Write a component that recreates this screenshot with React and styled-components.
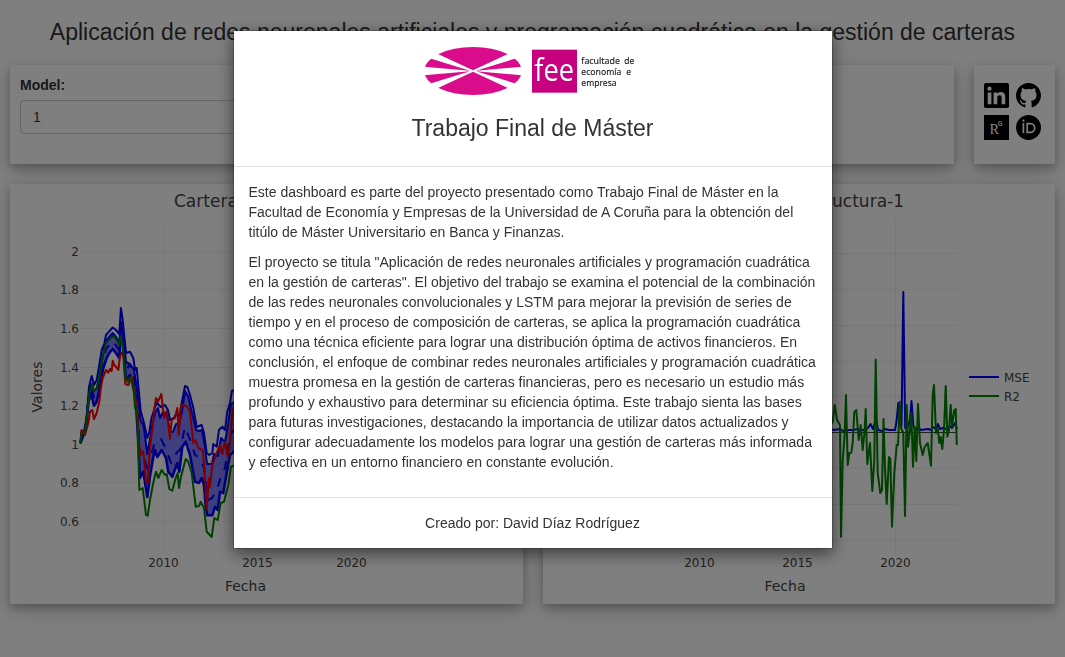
import React from 'react';
import styled, { createGlobalStyle } from 'styled-components';
import { BsGithub } from 'react-icons/bs';

const GlobalStyle = createGlobalStyle`
  * { box-sizing: border-box; }
  html, body { margin: 0; height: 100%; overflow: hidden; }
  body {
    background: #fff;
    color: #333;
    font: 14px/20px "Liberation Sans", Arial, sans-serif;
  }
`;

const Page = styled.div`
  display: flex;
  flex-direction: column;
  height: 657px;
  padding: 0 10px;
`;

const PageTitle = styled.h1`
  margin: 0;
  padding-top: 19px;
  height: 65px;
  font-size: 23px;
  line-height: 27px;
  font-weight: 400;
  text-align: center;
  white-space: nowrap;
`;

const Row = styled.div`
  display: flex;
  gap: 20px;
  margin-bottom: 20px;
`;

const Card = styled.section`
  flex: ${(p) => (p.$width ? `0 0 ${p.$width}px` : '1 1 0')};
  min-width: 0;
  height: ${(p) => p.$height}px;
  padding: ${(p) => p.$padding || '0'};
  background: #fff;
  box-shadow: 0 4px 8px 0 rgba(0, 0, 0, 0.2), 0 6px 20px 0 rgba(0, 0, 0, 0.19);
`;

const Label = styled.label`
  display: block;
  font-weight: 700;
  margin-bottom: 5px;
`;

const SelectBox = styled.div`
  width: 300px;
  height: 34px;
  padding: 6px 12px;
  border: 1px solid #ccc;
  border-radius: 4px;
`;

const IconGrid = styled.div`
  display: grid;
  grid-template-columns: 25px 25px;
  gap: 7px;
  color: #000;
  svg { display: block; width: 25px; height: 25px; }
`;

const Chart = styled.svg`
  display: block;
  width: 100%;
  height: 100%;
  font-family: "DejaVu Sans", Verdana, sans-serif;
  font-size: 12px;
  fill: #444;
`;

const Trace = styled.polyline`
  fill: none;
  stroke: ${(p) => p.$color};
  stroke-width: ${(p) => p.$weight || 2};
  stroke-linejoin: round;
  stroke-dasharray: ${(p) => (p.$dashed ? '9 9' : 'none')};
`;

const GridLine = styled.path`
  fill: none;
  stroke: #eee;
  shape-rendering: crispEdges;
`;

const Backdrop = styled.div`
  position: fixed;
  inset: 0;
  background: rgba(0, 0, 0, 0.5);
  display: flex;
  justify-content: center;
  align-items: flex-start;
  padding-top: 30px;
`;

const Modal = styled.div`
  width: 600px;
  background: #fff;
  background-clip: padding-box;
  border: 1px solid rgba(0, 0, 0, 0.2);
  box-shadow: 0 5px 15px rgba(0, 0, 0, 0.5);
`;

const ModalHeader = styled.header`
  height: 136px;
  padding-top: 5px;
  border-bottom: 1px solid #e5e5e5;
  text-align: center;
`;

const Logo = styled.svg`
  display: block;
  width: 240px;
  height: 70px;
  margin: 0 auto;
  position: relative;
  left: -3px;
`;

const ModalTitle = styled.h3`
  margin: 9px 0 0;
  font-size: 23px;
  line-height: 26px;
  font-weight: 400;
`;

const ModalBody = styled.div`
  padding: 15px;
  p { margin: 0 0 10px; }
`;

const ModalFooter = styled.footer`
  padding: 15px;
  border-top: 1px solid #e5e5e5;
  text-align: center;
`;

const upper = '80.5,443 81.5,431 84,432 86.7,416.7 89,387 91.7,376 94,385 96.7,380 99.3,365 101.7,350 104.3,344 106,335 109,331.7 112.7,327.5 116,330 119.3,334 120.9,308 122.7,320 124.7,340 126,353 130,351.7 133.3,358 135,370 136.7,368 138.7,390 140.7,411 144,423 147.3,438 149.3,432 151.5,418 155,407 157,403 160.7,407 165,405 168,410 170,420 174,418 176.7,413 179.3,417 181.7,403 185,386 187.3,387 190,395 193.3,408 196.7,427 201.7,425 204,433 206.7,453 209.3,455 212.3,453 213.3,444 216.7,446.7 219,430 222.3,426.7 225,430 227.3,411.7 230,403 232,390.7 238,389';
const inner = '80.5,443 82,433 85,433 87.5,409 90,386 92,384 94,391 97,388 100,372 103,355 106,341 109,337 112.7,333 116,337 119.3,342 121.2,322 123.5,338 126,362 130,364 134,370 137,390 140.7,421 143.5,425 147.3,454 149.5,442 152,427 155,413 158,408 160,418 163,412 167,415 170,432 173,432 176,424 179,424 182,412 185,391 188,396 192,413 196,430 199,431 202,430 205,447 207,464 212,464 214,454 218,456 221,438 225,442 228,425 231,404 238,400';
const middle = '80.5,443 83,434 86,424 89,393 92,390 94,397 98,386 102,362 106,349 110,344 113,341 119,350 121,330 124,350 126,371 130,364 134,377 137,400 140,453 144,451 147,474 150,458 155,442 161,439 166,449 171,463 177,452 180,450 185,427 191,442 195,455 200,458 204,468 208,500 212,498 217,490 221,476 225,468 230,435 238,425';
const lower = '80.5,443 83,436 86,428 88.5,402 91,393 94,405.7 96.7,401.7 100,386.7 103.3,368 106.7,358 109.3,353 112.7,349 116,353 119.3,358 120.7,337 122.7,340 126,380 130,375 134,387 136.5,412 138.3,443 140,478 143.3,471.7 147.3,497 150,476 153.3,456.7 155,450 157.3,457 161.7,450 166,458 168.3,471.7 172.3,476.7 177.3,463 179.3,471.7 182.3,446.7 185.7,441.7 190,455 195,481.7 199,483 201.7,478 204,485 205.7,506.7 207.3,515.3 212.3,515.3 215,506.7 217.7,510 220,491.7 223.3,493 226.7,473 230,455 238,448';
const green = '80.5,444 81.5,434 85,433 87.5,411 89.3,393 92,384 94,391 96.7,389 99.3,375 102.7,356.7 106,343 109.3,340 112.7,335.7 116,339 119.3,345 120.7,336.7 122.7,345 125.3,376.7 127.7,381.7 130.7,377 134,393 135,408 136.5,407 137.8,430 139.3,490 142.7,488 146,515 147.7,515.7 150,500 153,484 156,471.7 158.3,478 161.7,470 165,475 166.7,474 169.3,489 172.3,490.7 175.7,478 177.7,473 179,488 181,476.7 185.7,459 188.3,461.7 191.7,473 195.7,506.7 199,506 200.7,501.7 204,508 206.7,531.7 211.7,537 214.3,518 217.7,520 220.7,503 224,501.7 228.3,485 231,466.7 238,464';
const red = '80.5,441 81.7,430 85,435 88.3,423 90,411.7 92.3,410 94,419 96.7,413 99.3,401.7 101,386.7 102.7,378 106,370 108.3,372.7 110,369 111.7,371 112.7,360.7 114.3,365 116.7,367.7 118.3,370 120,356.7 121.7,352.7 123.3,355 125.3,384 128.3,385 131.7,377 134,390 135.7,400 137.5,412 139,443 140.7,455 143.3,451.7 146,481.7 147.7,483 150,447 152.7,427 154,411.7 156,398 158,401.7 161.3,394 164,418 166.7,410.7 170,439 171.7,420 175,418 177.3,408 178.7,435 181,405 186.7,406 190,411.7 193.3,443 195.7,440 198.3,448 202.7,450 204.3,466.7 206.7,509 209,478 210,486.7 212.3,465 216.7,453 220,445 222.3,454 225,441.7 227.7,457 230,443 232.7,410 238,400';
const mse = '826,430 830,429 834,430 840,429 843,431 848,430 853,430 858,429 861,430 865,430 868,428 870.5,424 873,429 876,419 878,430 882,431 885,429 889,430 895,430 896.6,421 898.3,403 900,418 901.5,426 903.3,292 905.2,428 907,429 910,420 911.5,401 913.3,425 915,430 918,427 921,430 928,429 931,430 933,427 936,429 938,424 940,429 943,428 946,429 950,426 952,428 955,423 957,429';
const r2 = '828,430 832.7,421.7 834.7,405 837,420 840,425 841,536.7 842.7,460 844.5,437 846,395 847.7,465 849.3,453 851.3,452.7 852.7,443 854.3,411.7 856.3,410 858.7,440 860.7,425 862.7,450 864.5,432 865.7,409 867.3,464 870,443 872.3,491 874.3,460 875.7,359.5 877.7,473 880.3,493 882,490 883.5,419 885,468 886.7,504 889,457 890.3,459 892,526.7 894.3,473 896.7,445 898,445 899.7,401.7 901,428 903.3,433 905,516 906.7,405 908,446.7 910,430 911.3,413 913,466.7 914.7,427 916.3,461 918,404 920,443 922.7,455 924.7,447 927.7,443 931,465.7 932.7,395 934,385 936,433 937.7,428 939.3,443 940.7,437 942.3,449 944,430 945.7,386 947.3,436.7 949,430 950.7,405 952,426.7 954.3,410 955.7,409 956.8,445';

const band = `${inner} ${lower.split(' ').reverse().join(' ')}`;
const yTicks = [
  ['2', 251], ['1.8', 289.5], ['1.6', 328], ['1.4', 367.2],
  ['1.2', 405], ['1', 444], ['0.8', 482.5], ['0.6', 521],
];

function PortfolioChart() {
  return (
    <Chart viewBox="10 184 513 420" preserveAspectRatio="xMinYMin">
      <text x="174" y="207" fontSize="17">Cartera Estructura-1</text>
      <GridLine d="M163.5 221V553M257.5 221V553M351.5 221V553" />
      {yTicks.map(([label, y]) => (
        <g key={label}>
          <GridLine d={`M80 ${Math.floor(y) + 0.5}H425`} />
          <text x="79" y={y + 4.5} textAnchor="end">{label}</text>
        </g>
      ))}
      <polygon points={band} fill="#00f" opacity=".5" />
      <Trace $color="#00f" points={upper} />
      <Trace $color="#00f" points={inner} />
      <Trace $color="#00f" $dashed points={middle} />
      <Trace $color="#00f" $weight={2.6} points={lower} />
      <Trace $color="#f00" points={red} />
      <Trace $color="green" points={green} />
      <text x="163.5" y="567" textAnchor="middle">2010</text>
      <text x="257.5" y="567" textAnchor="middle">2015</text>
      <text x="351.5" y="567" textAnchor="middle">2020</text>
      <text x="245.5" y="591" fontSize="14" textAnchor="middle">Fecha</text>
      <text transform="translate(42 387) rotate(-90)" fontSize="14" textAnchor="middle">Valores</text>
    </Chart>
  );
}

function MetricsChart() {
  return (
    <Chart viewBox="543 184 512 420" preserveAspectRatio="xMinYMin">
      <text x="904" y="207" fontSize="17" textAnchor="end">Métricas Estructura-1</text>
      <GridLine d="M699.5 219V553M797.5 219V553M895.5 219V553M613 253.5H957M613 289.5H957M613 325.5H957M613 361.5H957M613 396.5H957M613 468.5H957M613 504.5H957M613 540.5H957" />
      <path d="M613 432.5H957" stroke="#444" />
      <Trace $color="#00f" points={mse} />
      <Trace $color="green" points={r2} />
      <path d="M969 377H999" stroke="#00f" strokeWidth="2" />
      <path d="M969 396H999" stroke="green" strokeWidth="2" />
      <text x="1004" y="382">MSE</text>
      <text x="1004" y="401">R2</text>
      <text x="699.5" y="567" textAnchor="middle">2010</text>
      <text x="797.5" y="567" textAnchor="middle">2015</text>
      <text x="895.5" y="567" textAnchor="middle">2020</text>
      <text x="785" y="591" fontSize="14" textAnchor="middle">Fecha</text>
    </Chart>
  );
}

function LinkedinIcon() {
  return (
    <svg viewBox="0 0 25 25">
      <rect width="25" height="25" rx="1.8" />
      <g fill="#fff">
        <circle cx="5.5" cy="5.7" r="2.1" />
        <path d="M3.7 9.4H7.4V21.3H3.7ZM9.6 9.4H13.1V11C13.8 9.8 15.1 9.1 16.8 9.1C20.3 9.1 21.3 11.3 21.3 14.7V21.3H17.6V15.4C17.6 13.7 17.4 12.3 15.6 12.3C13.8 12.3 13.3 13.6 13.3 15.3V21.3H9.6Z" />
      </g>
    </svg>
  );
}

function ResearchGateIcon() {
  return (
    <svg viewBox="0 0 25 25">
      <rect width="25" height="25" />
      <text x="5.6" y="18.5" fontFamily="Liberation Serif, serif" fontSize="15.5" fill="#fff" textLength="9.6" lengthAdjust="spacingAndGlyphs">R</text>
      <text x="14" y="10.8" fontFamily="Liberation Sans, sans-serif" fontSize="7" fill="#fff" stroke="#fff" strokeWidth=".2" textLength="4.4" lengthAdjust="spacingAndGlyphs">G</text>
    </svg>
  );
}

function OrcidIcon() {
  return (
    <svg viewBox="0 0 25 25">
      <circle cx="12.5" cy="12.5" r="12.5" />
      <circle cx="7.4" cy="5.7" r="1.1" fill="#fff" />
      <path d="M7.4 8V18M11.2 8.7H14.4a4.3 4.3 0 0 1 0 8.6H11.2Z" fill="none" stroke="#fff" strokeWidth="1.7" />
    </svg>
  );
}

function FacultyLogo() {
  return (
    <Logo viewBox="0 0 720 210">
      <clipPath id="oval"><ellipse cx="189" cy="105" rx="146" ry="72" /></clipPath>
      <g clipPath="url(#oval)" fill="#d90d8c">
        <path d="M189 103L30 29V0H348V29ZM189 107L30 181V210H348V181Z" />
        <path d="M180 104L30 58V91ZM180 106L30 152V119ZM198 104L348 58V91ZM198 106L348 152V119Z" />
      </g>
      <rect x="366" y="41" width="135" height="129" fill="#c6007e" />
      <text x="373" y="135" fontFamily="Open Sans, sans-serif" fontSize="92" fill="#fff" textLength="119" lengthAdjust="spacingAndGlyphs">fee</text>
      <g fontFamily="Noto Sans, sans-serif" fontSize="26" fill="#222" stroke="#222" strokeWidth=".4">
        <text x="514" y="85" textLength="116" lengthAdjust="spacingAndGlyphs">facultade</text>
        <text x="643" y="85" textLength="30" lengthAdjust="spacingAndGlyphs">de</text>
        <text x="514" y="117" textLength="120" lengthAdjust="spacingAndGlyphs">economía</text>
        <text x="649" y="117">e</text>
        <text x="514" y="150" textLength="106" lengthAdjust="spacingAndGlyphs">empresa</text>
      </g>
    </Logo>
  );
}

export default function App() {
  return (
    <>
      <GlobalStyle />
      <Page>
        <PageTitle>Aplicación de redes neuronales artificiales y programación cuadrática en la gestión de carteras</PageTitle>
        <Row>
          <Card $height={99} $padding="10px">
            <Label>Model:</Label>
            <SelectBox>1</SelectBox>
          </Card>
          <Card $width={81} $height={99} $padding="18px 10px">
            <IconGrid>
              <LinkedinIcon />
              <BsGithub />
              <ResearchGateIcon />
              <OrcidIcon />
            </IconGrid>
          </Card>
        </Row>
        <Row>
          <Card $width={513} $height={420}><PortfolioChart /></Card>
          <Card $height={420}><MetricsChart /></Card>
        </Row>
      </Page>
      <Backdrop>
        <Modal>
          <ModalHeader>
            <FacultyLogo />
            <ModalTitle>Trabajo Final de Máster</ModalTitle>
          </ModalHeader>
          <ModalBody>
            <p>Este dashboard es parte del proyecto presentado como Trabajo Final de Máster en la Facultad de Economía y Empresas de la Universidad de A Coruña para la obtención del titúlo de Máster Universitario en Banca y Finanzas.</p>
            <p>El proyecto se titula "Aplicación de redes neuronales artificiales y programación cuadrática en la gestión de carteras". El objetivo del trabajo se examina el potencial de la combinación de las redes neuronales convolucionales y LSTM para mejorar la previsión de series de tiempo y en el proceso de composición de carteras, se aplica la programación cuadrática como una técnica eficiente para lograr una distribución óptima de activos financieros. En conclusión, el enfoque de combinar redes neuronales artificiales y programación cuadrática muestra promesa en la gestión de carteras financieras, pero es necesario un estudio más profundo y exhaustivo para determinar su eficiencia óptima. Este trabajo sienta las bases para futuras investigaciones, destacando la importancia de utilizar datos actualizados y configurar adecuadamente los modelos para lograr una gestión de carteras más informada y efectiva en un entorno financiero en constante evolución.</p>
          </ModalBody>
          <ModalFooter>Creado por: David Díaz Rodríguez</ModalFooter>
        </Modal>
      </Backdrop>
    </>
  );
}
